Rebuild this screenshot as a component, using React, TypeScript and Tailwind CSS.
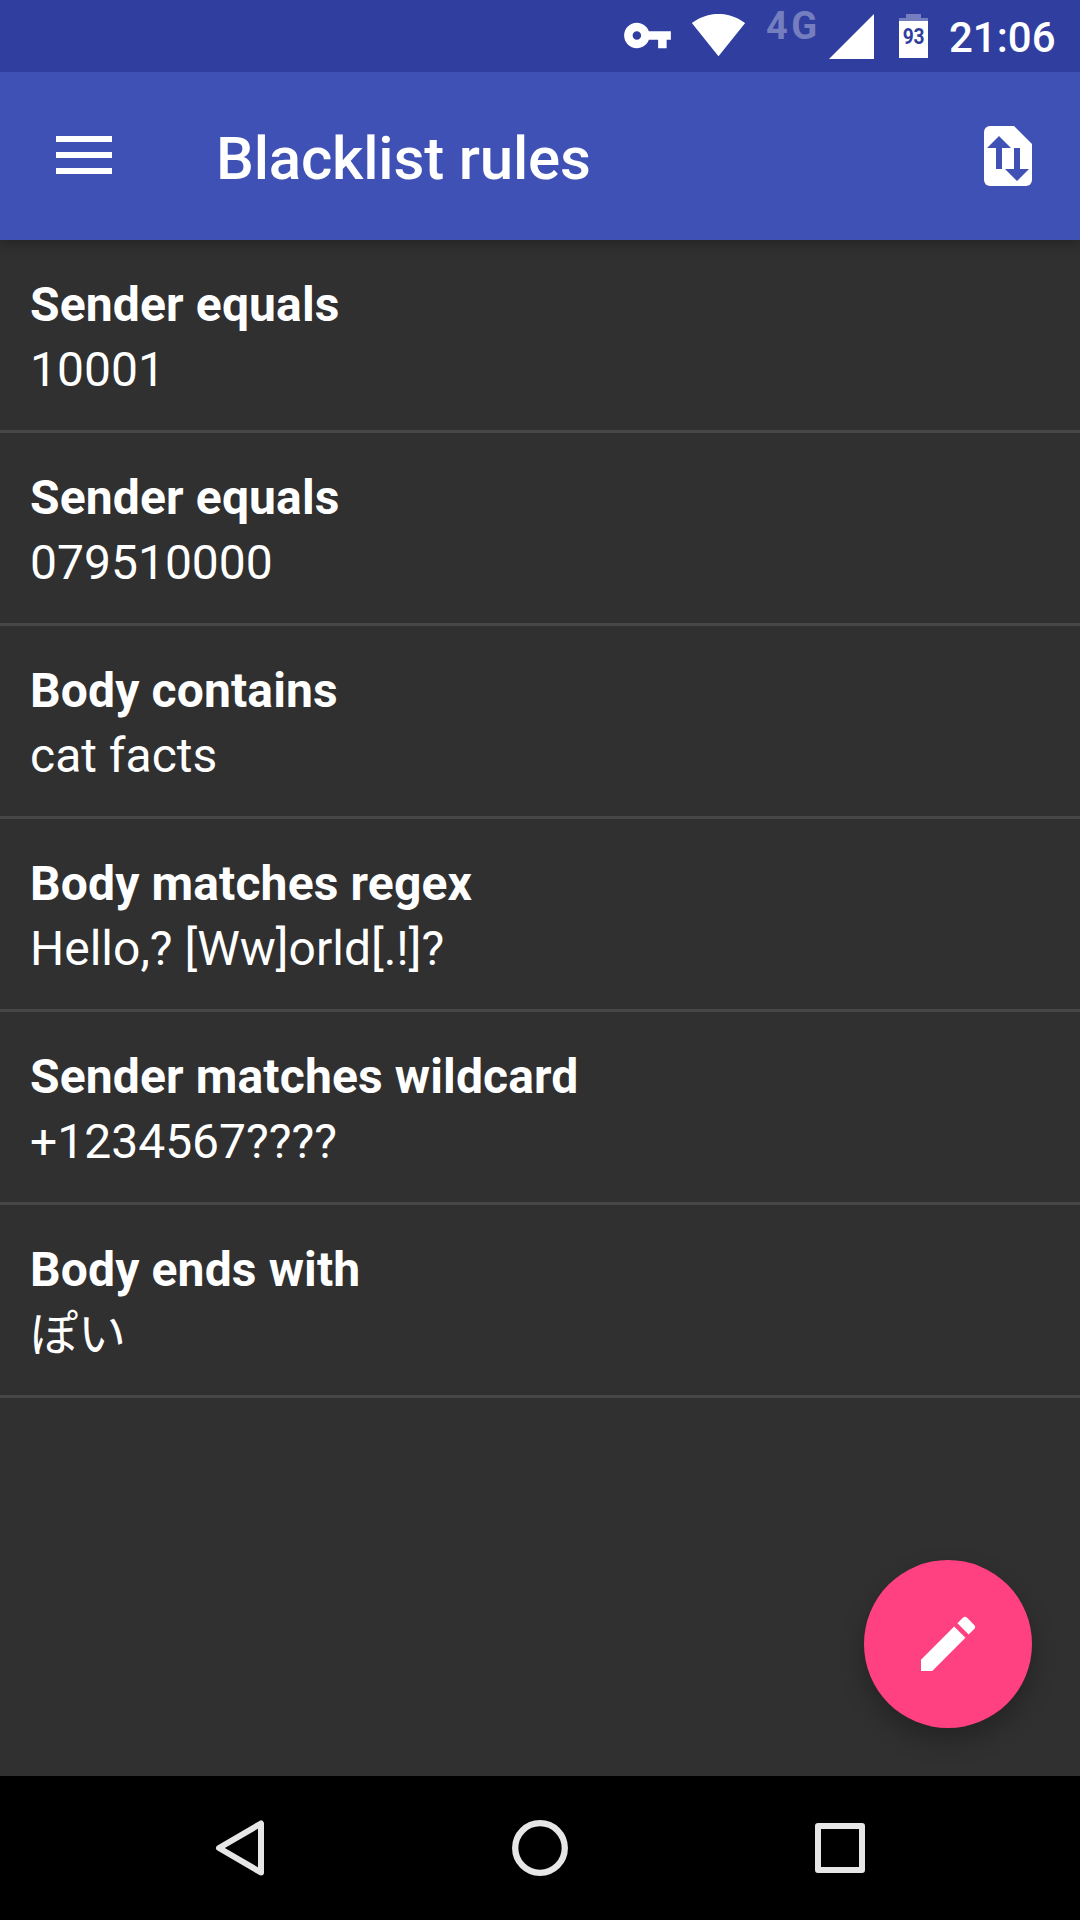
const rules = [
  { title: "Sender equals", value: "10001" },
  { title: "Sender equals", value: "079510000" },
  { title: "Body contains", value: "cat facts" },
  { title: "Body matches regex", value: "Hello,? [Ww]orld[.!]?" },
  { title: "Sender matches wildcard", value: "+1234567????" },
  { title: "Body ends with", value: "ぽい" },
];

function StatusBar() {
  return (
    <div className="relative z-20 flex h-[72px] shrink-0 items-start bg-[#303f9f] text-white">
      <svg className="mt-[10px] ml-[622px] size-[51px] shrink-0" viewBox="0 0 24 24" fill="currentColor">
        <path d="M12.65 10C11.83 7.67 9.61 6 7 6c-3.31 0-6 2.69-6 6s2.69 6 6 6c2.61 0 4.83-1.67 5.65-4H17v4h4v-4h2v-4H12.65zM7 14c-1.1 0-2-.9-2-2s.9-2 2-2 2 .9 2 2-.9 2-2 2z" />
      </svg>
      <svg className="mt-[7px] ml-[18px] size-[55px] shrink-0" viewBox="0 0 24 24" fill="currentColor">
        <path d="M12.01 21.49L23.64 7c-.45-.34-4.93-4-11.64-4C5.28 3 .81 6.66.36 7l11.63 14.49.01.01.01-.01z" />
      </svg>
      <div className="mt-[4px] ml-[20px] w-[63px] shrink-0 text-[38px] leading-[44px] font-bold tracking-[3.4px] text-[#757ebf]">4G</div>
      <svg className="mt-[14px] size-[45px] shrink-0" viewBox="0 0 45 45" fill="currentColor">
        <path d="M45 0v45H0z" />
      </svg>
      <div className="mt-[14px] ml-[25px] flex w-[29px] shrink-0 flex-col items-center">
        <div className="h-[4px] w-[15px] bg-[#757ebf]" />
        <div className="h-[3px] w-full bg-[#757ebf]" />
        <div className="flex h-[37px] w-full justify-center bg-white">
          <span className="mt-[3px] scale-x-[0.87] text-[22px] leading-[26px] font-bold text-[#303f9f]">93</span>
        </div>
      </div>
      <div className="mt-[13px] ml-[21px] text-[42px] leading-[50px] font-medium">21:06</div>
    </div>
  );
}

function AppBar() {
  return (
    <header className="z-10 flex h-[168px] shrink-0 items-center bg-[#3f51b5] text-white shadow-[0_3px_12px_rgba(0,0,0,0.3)]">
      <button className="mb-[2px] ml-[56px] flex w-[56px] flex-col gap-[10px]" aria-label="Menu">
        <span className="h-[6px] w-full bg-white" />
        <span className="h-[6px] w-full bg-white" />
        <span className="h-[6px] w-full bg-white" />
      </button>
      <h1 className="mt-[6px] ml-[104px] flex-1 text-[60px] leading-[70px] font-medium tracking-[-0.18px]">Blacklist rules</h1>
      <button className="mr-[36px]" aria-label="Import and export">
        <svg className="size-[72px]" viewBox="0 0 72 72">
          <path fill="#fff" d="M18 6h24l18 18v36a6 6 0 0 1-6 6H18a6 6 0 0 1-6-6V12a6 6 0 0 1 6-6z" />
          <path fill="#3f51b5" d="M27 16l12 12h-9v21h-6V28h-9zM42 28h6v21h9L45 61 33 49h9z" />
        </svg>
      </button>
    </header>
  );
}

function NavigationBar() {
  return (
    <nav className="flex h-[144px] shrink-0 items-center justify-center gap-[228px] bg-black">
      <svg className="size-[72px]" viewBox="0 0 72 72" fill="none" stroke="#e6e6e6" strokeWidth="6" strokeLinejoin="round">
        <path d="M57 11.500v49L15 36z" />
      </svg>
      <svg className="size-[72px]" viewBox="0 0 72 72" fill="none" stroke="#e6e6e6" strokeWidth="6.300">
        <circle cx="36" cy="36" r="24.800" />
      </svg>
      <svg className="size-[72px]" viewBox="0 0 72 72" fill="none" stroke="#e6e6e6" strokeWidth="6" strokeLinejoin="round">
        <path d="M14 14h44v44H14z" />
      </svg>
    </nav>
  );
}

export default function App() {
  return (
    <div className="relative flex h-[1920px] w-[1080px] flex-col overflow-hidden bg-[#303030] font-[Roboto,'Noto_Sans_CJK_JP',sans-serif]">
      <StatusBar />
      <AppBar />
      <main className="flex-1">
        {rules.map((rule, i) => (
          <div key={i} className="h-[193px] border-b-[3px] border-[#474747] px-[30px] pt-[32px] text-[48px] text-white">
            <div className="h-[65px] leading-[65px] font-bold tracking-[0.14px]">{rule.title}</div>
            <div className="h-[65px] leading-[65px]">{rule.value}</div>
          </div>
        ))}
      </main>
      <button
        className="absolute right-[48px] bottom-[192px] flex size-[168px] items-center justify-center rounded-full bg-[#ff4081] shadow-[0_12px_24px_rgba(0,0,0,0.26)]"
        aria-label="Edit"
      >
        <svg className="size-[72px]" viewBox="0 0 24 24" fill="#fff">
          <path d="M3 17.250V21h3.750L17.810 9.940l-3.750-3.750L3 17.250zM20.710 7.040a1 1 0 0 0 0-1.410l-2.340-2.340a1 1 0 0 0-1.410 0l-1.830 1.830 3.750 3.750 1.830-1.830z" />
        </svg>
      </button>
      <NavigationBar />
    </div>
  );
}
